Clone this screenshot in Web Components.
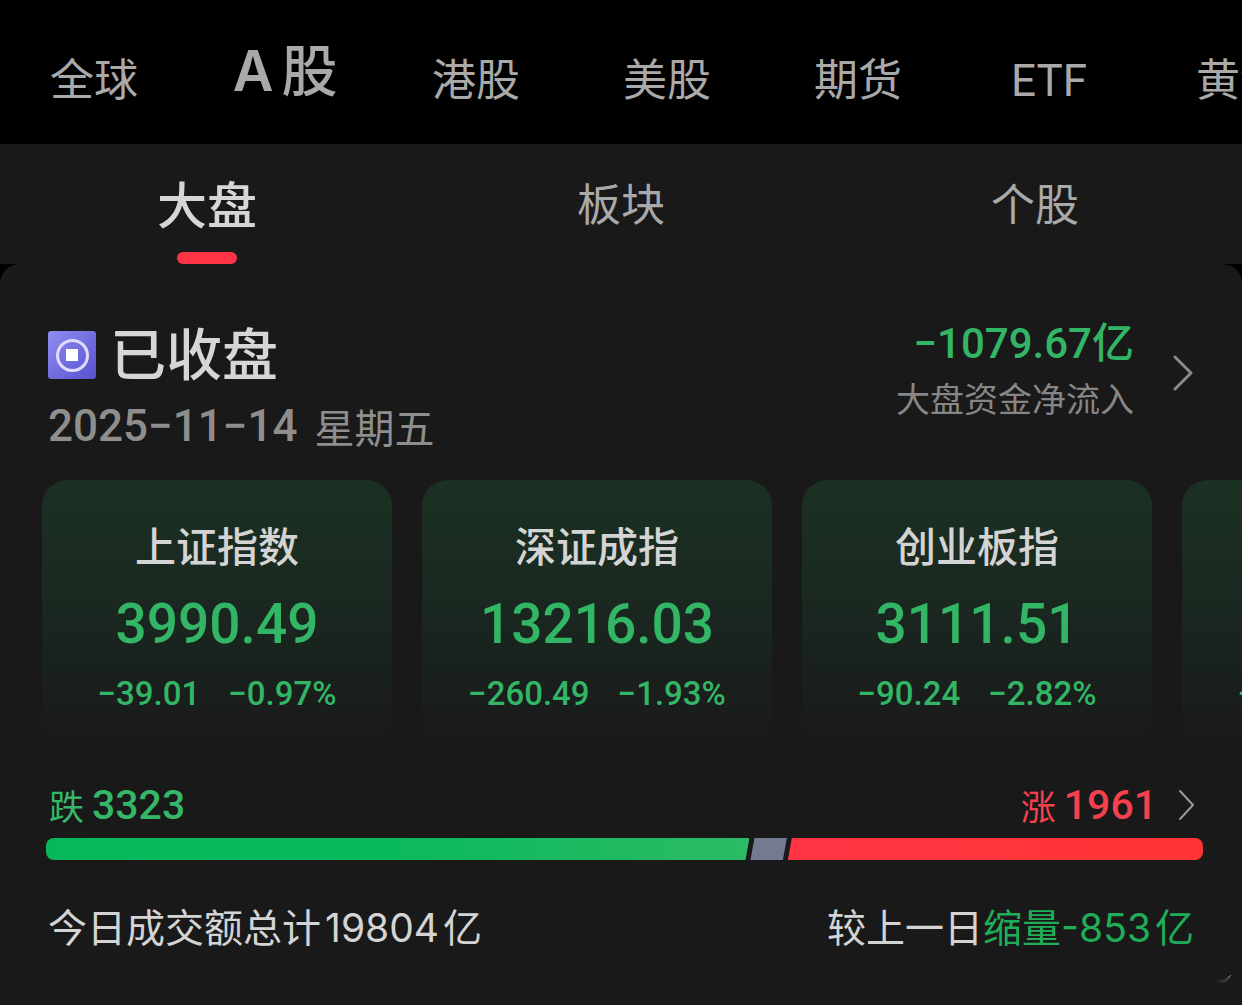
<!DOCTYPE html>
<html lang="zh-CN">
<head>
<meta charset="utf-8">
<meta name="viewport" content="width=device-width, initial-scale=1">
<title>A股行情</title>
<style>
  body {
    margin: 0;
    min-height: 100vh;
    background: #191919;
    color: #d4d4d4;
    font-family: "Noto Sans CJK SC", sans-serif;
    overflow-x: hidden;
  }
</style>
</head>
<body>
<market-app></market-app>

<script>
class BaseElement extends HTMLElement {
  constructor() {
    super();
    this.attachShadow({ mode: "open" });
  }
  connectedCallback() {
    this.shadowRoot.innerHTML = this.render();
  }
}

const RESET = `
  * { box-sizing: border-box; }
  button { border: 0; margin: 0; padding: 0; background: none; color: inherit; font: inherit; white-space: nowrap; cursor: pointer; }
  h2, h3, p { margin: 0; font-weight: inherit; font-size: inherit; }
  .num { font-family: Roboto, "Noto Sans CJK SC", sans-serif; font-weight: 500; }
`;

customElements.define("market-nav", class extends BaseElement {
  render() {
    return `<style>${RESET}
      :host { display: block; background: #000; overflow: hidden; }
      nav { display: flex; align-items: flex-end; gap: 103px; height: 144px; padding: 0 0 31px 50px;
            font-family: Roboto, "Noto Sans CJK SC", sans-serif; color: #a9a9a9; }
      button { flex: none; display: flex; justify-content: center; width: 88px; font-size: 44px; line-height: 64px; }
      button[aria-current] { gap: 8px; font-family: Inter, "Noto Sans CJK SC", sans-serif; font-size: 56px; line-height: 84px; font-weight: 600; }
      button[aria-current] span + span { font-weight: 500; }
    </style>
    <nav aria-label="市场">
      <button>全球</button><button aria-current="page"><span>A</span><span>股</span></button><button>港股</button><button>美股</button>
      <button>期货</button><button>ETF</button><button>黄金</button>
    </nav>`;
  }
});

customElements.define("section-tabs", class extends BaseElement {
  render() {
    return `<style>${RESET}
      :host { display: block; background: #191919; }
      div { display: grid; grid-template-columns: repeat(3, 1fr); height: 120px; }
      button { display: flex; flex-direction: column; align-items: center; justify-content: space-between;
               padding-top: 26px; font-size: 44px; line-height: 64px; color: #a9a9a9; }
      button[aria-selected="true"] { font-size: 50px; font-weight: 500; color: #d6d6d6; }
      button[aria-selected="true"]::after { content: ""; width: 60px; height: 12px; border-radius: 6px; background: #fd3446; }
    </style>
    <div role="tablist">
      <button role="tab" aria-selected="true">大盘</button>
      <button role="tab" aria-selected="false">板块</button>
      <button role="tab" aria-selected="false">个股</button>
    </div>`;
  }
});

customElements.define("market-status", class extends BaseElement {
  render() {
    return `<style>${RESET}
      :host { display: flex; justify-content: space-between; padding: 0 48px; }
      .title { display: flex; align-items: center; gap: 14px; font-family: Inter, "Noto Sans CJK SC", sans-serif;
               font-size: 56px; line-height: 72px; font-weight: 500; color: #d6d6d6; }
      .title svg { flex: none; }
      .date { display: flex; gap: 17px; font-size: 44px; line-height: 70px; color: #8e8e8e; }
      .date .day { font-size: 40px; }
      button { display: flex; align-items: center; align-self: flex-start; gap: 38px; text-align: right; }
      .flow { font-size: 42px; line-height: 50px; color: #32b666; }
      .label { font-size: 34px; line-height: 58px; color: #868686; }
      .flow, .label { display: block; }
    </style>
    <div>
      <h2 class="title">
        <svg width="48" height="48" viewBox="0 0 48 48" aria-hidden="true">
          <defs><linearGradient id="g" x1="0" y1="0" x2="1" y2="1"><stop offset="0" stop-color="#8f8df0"/><stop offset="1" stop-color="#5851cf"/></linearGradient></defs>
          <rect width="48" height="48" rx="3" fill="url(#g)"/>
          <circle cx="24.500" cy="24.500" r="15" fill="none" stroke="#dfdcfb" stroke-width="3"/>
          <rect x="18" y="18" width="12" height="12" fill="#fff"/>
        </svg>
        已收盘
      </h2>
      <p class="date"><span class="num">2025−11−14</span> <span class="day">星期五</span></p>
    </div>
    <button>
      <span><span class="flow num">−1079.67亿</span><span class="label">大盘资金净流入</span></span>
      <svg width="22" height="36" viewBox="0 0 22 36" fill="none" stroke="#8a8a8a" stroke-width="3" stroke-linecap="round" stroke-linejoin="round" aria-hidden="true"><path d="M3 2 19 18 3 34"/></svg>
    </button>`;
  }
});

customElements.define("index-card", class extends BaseElement {
  render() {
    return `<style>${RESET}
      :host { flex: none; display: block; width: 350px; }
      button { display: flex; flex-direction: column; align-items: center; width: 100%; height: 266px; padding-top: 34px;
               border-radius: 26px; background: linear-gradient(#1b3123, #1a2720 50%, #191919); color: #32b666; }
      .name { font-size: 41px; line-height: 60px; font-weight: 500; color: #d4d4d4; }
      .value { font-size: 55px; line-height: 100px; }
      .change { display: flex; gap: 28px; font-size: 33px; line-height: 40px; }
    </style>
    <button>
      <span class="name">${this.getAttribute("name")}</span>
      <span class="value num">${this.getAttribute("value")}</span>
      <span class="change num"><span>${this.getAttribute("change")}</span><span>${this.getAttribute("percent")}</span></span>
    </button>`;
  }
});

customElements.define("breadth-bar", class extends BaseElement {
  render() {
    const [down, flat, up] = ["down", "flat", "up"].map(k => Number(this.getAttribute(k)));
    return `<style>${RESET}
      :host { display: block; padding: 0 39px 0 46px; }
      .labels { display: flex; justify-content: space-between; padding: 0 8px 0 3px; line-height: 60px; font-size: 35px; }
      .labels > * { display: flex; align-items: center; gap: 8px; }
      b { font-size: 41px; }
      .down { color: #36b669; }
      .up { color: #f4414d; }
      .up svg { margin-left: 12px; }
      .bar { display: flex; gap: 1px; height: 22px; margin-top: 3px; border-radius: 8px; overflow: hidden; }
      .bar i { flex-basis: 0; }
      .bar i:nth-child(1) { flex-grow: ${down}; background: linear-gradient(90deg, #07b85b, #0bb95d 50%, #2cba65); clip-path: polygon(0 0, 100% 0, calc(100% - 4px) 100%, 0 100%); }
      .bar i:nth-child(2) { flex-grow: ${flat}; background: #747b90; clip-path: polygon(4px 0, 100% 0, calc(100% - 4px) 100%, 0 100%); }
      .bar i:nth-child(3) { flex-grow: ${up}; background: linear-gradient(90deg, #ff3545, #ff3434); clip-path: polygon(4px 0, 100% 0, 100% 100%, 0 100%); }
    </style>
    <div class="labels">
      <span class="down">跌<b class="num">${down}</b></span>
      <button class="up">涨<b class="num">${up}</b>
        <svg width="18" height="32" viewBox="0 0 18 32" fill="none" stroke="#9a9a9a" stroke-width="2" stroke-linecap="round" stroke-linejoin="round" aria-hidden="true"><path d="M3 2 16 16 3 30"/></svg>
      </button>
    </div>
    <div class="bar"><i></i><i></i><i></i></div>`;
  }
});

customElements.define("turnover-row", class extends BaseElement {
  render() {
    return `<style>${RESET}
      :host { display: flex; justify-content: space-between; padding: 0 48px; font-family: Inter, "Noto Sans CJK SC", sans-serif;
              font-size: 39px; line-height: 60px; color: #d4d4d4; }
      em { font-style: normal; color: #20ad58; }
      .total { margin: 0 4px; }
      .delta { margin-right: 4px; }
    </style>
    <p>今日成交额总计<span class="total">19804</span>亿</p>
    <p>较上一日<em>缩量<span class="delta">-853</span>亿</em></p>`;
  }
});

customElements.define("market-app", class extends BaseElement {
  render() {
    return `<style>${RESET}
      :host { display: block; background: #000; }
      main { position: relative; display: flex; flex-direction: column; min-height: calc(100vh - 264px); padding: 55px 0 44px;
             border-radius: 20px 20px 0 0; background: #191919; overflow: hidden; }
      .cards { display: flex; gap: 30px; margin-top: 19px; padding-left: 42px; overflow: hidden; }
      breadth-bar { margin-top: 29px; }
      turnover-row { margin-top: 38px; }
      .mark { position: absolute; right: 10px; bottom: 20px; }
    </style>
    <market-nav></market-nav>
    <section-tabs></section-tabs>
    <main>
      <market-status></market-status>
      <div class="cards">
        <index-card name="上证指数" value="3990.49" change="−39.01" percent="−0.97%"></index-card>
        <index-card name="深证成指" value="13216.03" change="−260.49" percent="−1.93%"></index-card>
        <index-card name="创业板指" value="3111.51" change="−90.24" percent="−2.82%"></index-card>
        <index-card name="沪深300" value="4628.14" change="−73.93" percent="−1.57%"></index-card>
      </div>
      <breadth-bar down="3323" flat="172" up="1961"></breadth-bar>
      <turnover-row></turnover-row>
      <svg class="mark" width="18" height="12" viewBox="0 0 18 12" aria-hidden="true">
        <defs><linearGradient id="m"><stop offset="0" stop-color="#191919"/><stop offset="1" stop-color="#4a4a4a"/></linearGradient></defs>
        <path d="M1 7Q8 9 17 2Q14 10 7 10Q3 10 1 7Z" fill="url(#m)"/>
        <path d="M14 5 17 2" stroke="#8a8a8a"/>
      </svg>
    </main>`;
  }
});
</script>
</body>
</html>
